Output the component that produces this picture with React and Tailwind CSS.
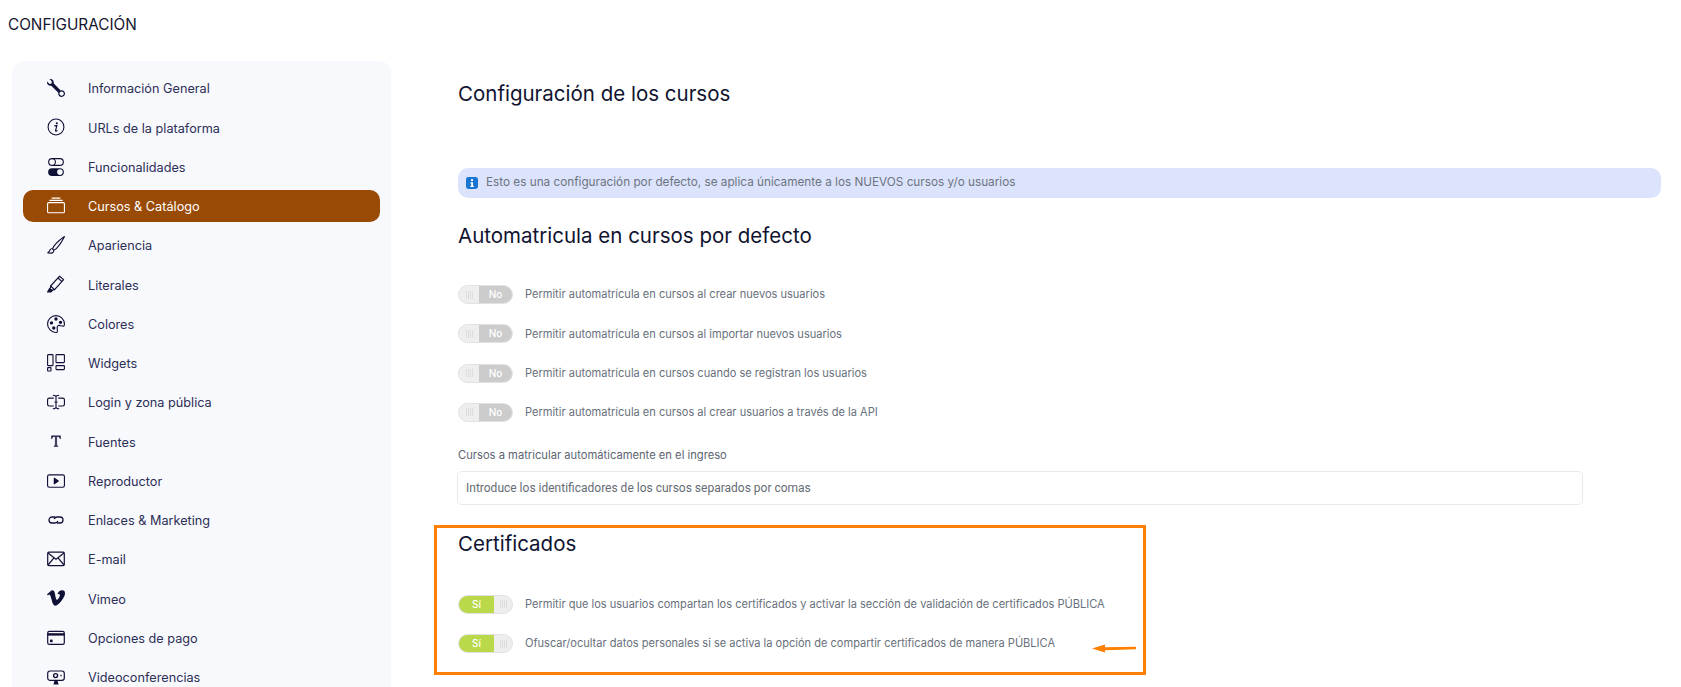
import { BsWrench, BsToggles, BsCollection, BsBrush, BsPalette, BsInputCursorText, BsPlayBtn, BsVimeo } from "react-icons/bs";

const InfoItalic = ({ className }) => (
  <svg viewBox="0 0 20 20" className={className} fill="none" stroke="currentColor">
    <circle cx="10" cy="10" r="8.8" strokeWidth="1.2" />
    <circle cx="10.9" cy="5.8" r="1.1" fill="currentColor" stroke="none" />
    <path d="M8.2 8.8 L11 8.4 L9.5 14 Q9.4 14.9 10.2 14.6 L11.6 13.8" strokeWidth="1.3" />
  </svg>
);

const HighlighterIcon = ({ className }) => (
  <svg viewBox="0 0 18 18" className={className} fill="none" stroke="currentColor" strokeWidth="1.2" strokeLinejoin="round">
    <path d="M12.6 1.2 L16.6 4.6 L7.6 14.6 L3.6 11 Z" />
    <path d="M11 3 L15 6.6" />
    <path d="M3.6 11 L3.4 13 L2.4 14 L5.2 15.4 L6 14.8 L7.6 14.6" />
    <path d="M0.6 17 L2.4 14 L5 15.6 L4 17 Z" fill="currentColor" />
  </svg>
);

const WidgetsIcon = ({ className }) => (
  <svg viewBox="0 0 18 18" className={className} fill="none" stroke="currentColor" strokeWidth="1.1">
    <rect x="0.6" y="0.6" width="5.4" height="11" rx="0.6" />
    <rect x="0.6" y="13.6" width="3.4" height="3.4" rx="0.4" />
    <rect x="9" y="0.6" width="8.4" height="8" rx="0.6" />
    <rect x="9" y="11.6" width="8.4" height="4" rx="0.6" />
  </svg>
);

const TypeIcon = ({ className }) => (
  <svg viewBox="-2 -2 22 22" className={className} fill="currentColor" stroke="currentColor" strokeWidth="0.5">
    <path d="M3.6 2.6h10.8l.2 3.8h-.7c-.3-1.9-1-2.9-3-2.9H9.8v10.4c0 .8.3 1 1.6 1.1v.6H6.6V15c1.3-.1 1.6-.3 1.6-1.1V3.5H7.1c-2 0-2.7 1-3 2.9h-.7z" />
  </svg>
);

const LinkIcon = ({ className }) => (
  <svg viewBox="0 0 18 18" className={className} fill="none" stroke="currentColor" strokeWidth="1.3">
    <path d="M8 6 H5 a3 3 0 0 0 0 6 H8 a3 3 0 0 0 2.8 -2" />
    <path d="M10 12 H13 a3 3 0 0 0 0 -6 H10 a3 3 0 0 0 -2.8 2" />
  </svg>
);

const MailIcon = ({ className }) => (
  <svg viewBox="0 0 18 18" className={className} fill="none" stroke="currentColor" strokeWidth="1.2">
    <rect x="0.7" y="2.2" width="16.6" height="13.4" rx="1.2" />
    <path d="M1 3 L9 9.2 L17 3 M1 15 L7 7.8 M17 15 L11 7.8" />
  </svg>
);

const CardIcon = ({ className }) => (
  <svg viewBox="0 0 18 18" className={className} fill="none" stroke="currentColor" strokeWidth="1.2">
    <rect x="0.7" y="2.4" width="16.6" height="13" rx="1.6" />
    <rect x="0.7" y="4.2" width="16.6" height="2.4" fill="currentColor" stroke="none" />
    <rect x="3" y="10.6" width="2.6" height="2.6" fill="currentColor" stroke="none" />
  </svg>
);

const WebcamIcon = ({ className }) => (
  <svg viewBox="0 0 18 18" className={className} fill="none" stroke="currentColor" strokeWidth="1.2">
    <rect x="0.7" y="3" width="16.6" height="9.4" rx="2.4" />
    <circle cx="8.6" cy="7.6" r="2" strokeWidth="1.4" />
    <path d="M14 6.8 v1.4" />
    <path d="M6.4 16.4 L7.4 13 H10.6 L11.6 16.4 Z" fill="currentColor" stroke="none" />
  </svg>
);

const AlertIcon = ({ className }) => (
  <svg viewBox="0 0 12 12" className={className}>
    <rect width="12" height="12" rx="2.4" fill="#1976d2" />
    <rect x="5" y="2.2" width="2" height="1.8" fill="#fff" />
    <path d="M4.4 5.2 H7 V8.8 H7.8 V10 H4.4 V8.8 H5.2 V6.4 H4.4 Z" fill="#fff" />
  </svg>
);

const menu = [
  { label: "Información General", Icon: BsWrench },
  { label: "URLs de la plataforma", Icon: InfoItalic },
  { label: "Funcionalidades", Icon: BsToggles },
  { label: "Cursos & Catálogo", Icon: BsCollection, active: true },
  { label: "Apariencia", Icon: BsBrush },
  { label: "Literales", Icon: HighlighterIcon },
  { label: "Colores", Icon: BsPalette },
  { label: "Widgets", Icon: WidgetsIcon },
  { label: "Login y zona pública", Icon: BsInputCursorText },
  { label: "Fuentes", Icon: TypeIcon },
  { label: "Reproductor", Icon: BsPlayBtn },
  { label: "Enlaces & Marketing", Icon: LinkIcon },
  { label: "E-mail", Icon: MailIcon },
  { label: "Vimeo", Icon: BsVimeo },
  { label: "Opciones de pago", Icon: CardIcon },
  { label: "Videoconferencias", Icon: WebcamIcon },
];

const Grip = () => (
  <span className="flex gap-[1px] h-[8px]">
    <i className="w-[1px] bg-[#dddddd]" />
    <i className="w-[1px] bg-[#dddddd]" />
    <i className="w-[1px] bg-[#dddddd]" />
    <i className="w-[1px] bg-[#dddddd]" />
  </span>
);

function Toggle({ on }) {
  return (
    <span className="flex shrink-0 w-[55px] h-[19px] rounded-full overflow-hidden border border-[#e2e2e2] bg-[#eeeeee]">
      {on ? (
        <>
          <span className="w-[35px] bg-[#b9d84a] text-white text-[10px] flex items-center justify-center font-medium">Sí</span>
          <span className="flex-1 flex items-center justify-center"><Grip /></span>
        </>
      ) : (
        <>
          <span className="w-[20px] flex items-center justify-center"><Grip /></span>
          <span className="flex-1 bg-[#cccccc] text-white text-[10px] flex items-center justify-center font-medium">No</span>
        </>
      )}
    </span>
  );
}

function Row({ on, children }) {
  return (
    <div className="flex items-center gap-3 h-[19px] mb-[20.3px]">
      <Toggle on={on} />
      <span className="text-[11.06px] text-[#68707c] whitespace-nowrap">{children}</span>
    </div>
  );
}

const headingClass = "text-[20.5px] leading-[28px] text-[#101330] font-normal";

export default function App() {
  return (
    <div className="relative h-[687px] w-[1681px] overflow-hidden bg-white font-['Inter','Liberation_Sans',sans-serif]">
      <h1 className="pl-2 pt-[16px] text-[15.3px] leading-[18px] text-[#14152e] font-normal">CONFIGURACIÓN</h1>

      <div className="flex mt-[27px]">
        <aside className="w-[379px] ml-3 shrink-0 bg-[#f8f9fd] rounded-t-[12px] px-[11px] pt-[11px] h-[700px]">
          {menu.map(({ label, Icon, active }) => (
            <div
              key={label}
              className={`flex items-center h-[32px] mb-[7.25px] pl-[24px] rounded-[10px] ${active ? "bg-[#994a04] text-white" : "text-[#2c2f56]"}`}
            >
              <span className={`w-[18px] h-[18px] flex items-center justify-center ${active ? "text-white" : "text-[#0f1035]"}`}>
                <Icon className="w-[18px] h-[18px]" />
              </span>
              <span className="ml-[23px] text-[12.7px] translate-y-[1px]">{label}</span>
            </div>
          ))}
        </aside>

        <main className="ml-[67px] flex-1 pr-[20px]">
          <h2 className={`${headingClass} mt-[19px]`}>Configuración de los cursos</h2>

          <div className="mt-[60px] h-[30px] w-[1203px] rounded-[10px] bg-[#dce3fc] flex items-center pl-[8px] gap-[8px] text-[11.75px] text-[#6c7480]">
            <AlertIcon className="w-[12px] h-[12px]" />
            <span>Esto es una configuración por defecto, se aplica únicamente a los NUEVOS cursos y/o usuarios</span>
          </div>

          <h2 className={`${headingClass} mt-[24px]`}>Automatricula en cursos por defecto</h2>

          <div className="mt-[35px]">
            <Row>Permitir automatrícula en cursos al crear nuevos usuarios</Row>
            <Row>Permitir automatrícula en cursos al importar nuevos usuarios</Row>
            <Row>Permitir automatrícula en cursos cuando se registran los usuarios</Row>
            <Row>Permitir automatrícula en cursos al crear usuarios a través de la API</Row>
          </div>

          <p className="mt-[25px] text-[11.2px] leading-[16px] text-[#5c6470]">Cursos a matricular automáticamente en el ingreso</p>
          <div className="mt-[8px] -ml-[1px] w-[1126px] h-[34px] border border-[#e8e9ec] rounded-[5px] flex items-center pl-[8px] text-[12px] text-[#666c75] font-['Roboto',sans-serif]">
            Introduce los identificadores de los cursos separados por comas
          </div>

          <h2 className={`${headingClass} mt-[25px]`}>Certificados</h2>

          <div className="mt-[37px]">
            <Row on>Permitir que los usuarios compartan los certificados y activar la sección de validación de certificados PÚBLICA</Row>
            <Row on>Ofuscar/ocultar datos personales si se activa la opción de compartir certificados de manera PÚBLICA</Row>
          </div>
        </main>
      </div>

      {/* annotation over the page */}
      <div className="absolute left-[434px] top-[525px] w-[712px] h-[150px] border-[3px] border-[#ff8000]" />
      <svg className="absolute left-[1090px] top-[642px]" width="48" height="12" viewBox="0 0 48 12">
        <path d="M2 6.5 L15 2.5 L15 5.3 L46 4.8 L46 7.3 L15 8.3 L15 10.5 Z" fill="#ff8000" />
      </svg>
    </div>
  );
}
